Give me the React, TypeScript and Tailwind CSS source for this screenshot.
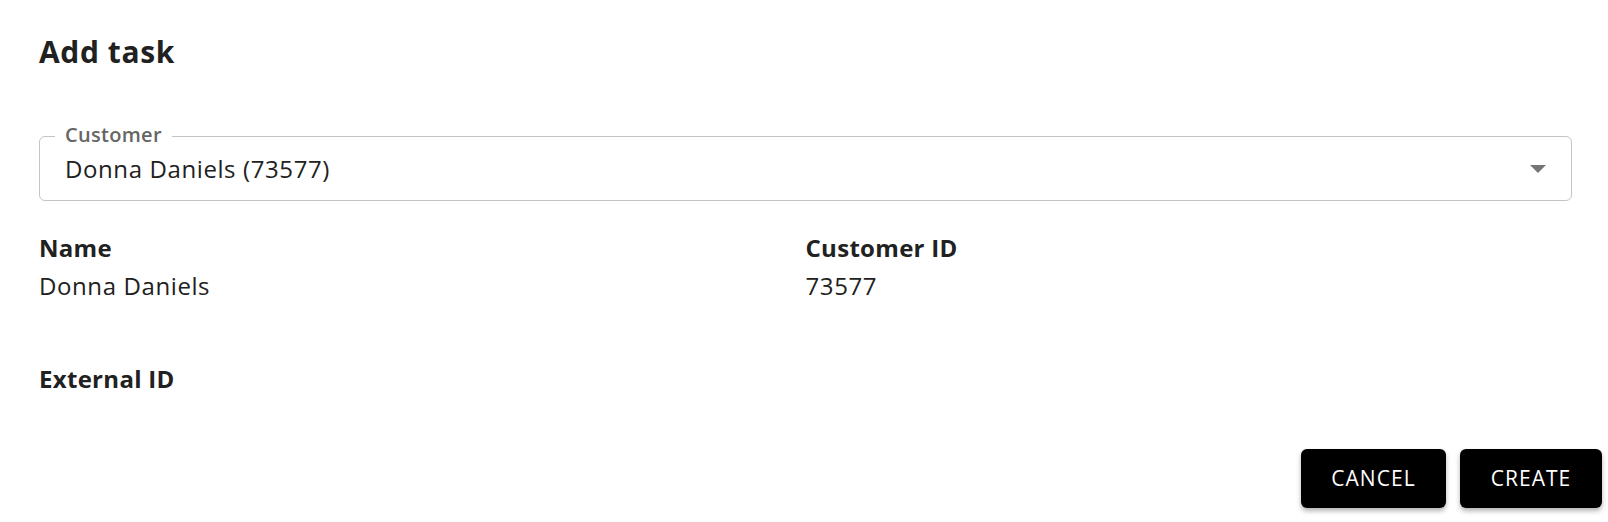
import React from 'react';

const font = { fontFamily: '"Open Sans", "Noto Sans", sans-serif' };

function Field({ label, value }: { label: string; value?: string }) {
  return (
    <div>
      <div className="text-[24px] font-bold leading-[38px] tracking-[0.3px] text-[#212121]">{label}</div>
      {value && <div className="text-[24px] leading-[38px] tracking-[0.6px] text-[#212121]">{value}</div>}
    </div>
  );
}

export default function App() {
  return (
    <div className="w-[1608px] h-[522px] bg-white" style={font}>
      <div className="pl-[39px] pr-[36px]">
        <h1 className="pt-[34px] text-[30px] font-bold leading-[36px] tracking-[0.6px] text-[#212121]">Add task</h1>

        {/* customer select */}
        <div className="relative mt-[66px] flex h-[65px] items-center justify-between rounded-[6px] border border-[#c4c4c4] pl-[25px] pr-[25px]">
          <span className="absolute -top-[12px] left-[15px] bg-white px-[10px] text-[20px] font-semibold leading-[20px] tracking-[0.3px] text-[#666666]">
            Customer
          </span>
          <span className="text-[24px] leading-[32px] tracking-[0.6px] text-[#212121]">Donna Daniels (73577)</span>
          <svg width="16" height="8" viewBox="0 0 16 8" className="mt-[1px]">
            <path d="M0 0h16L8 8z" fill="#757575" />
          </svg>
        </div>

        <div className="mt-[28px] grid grid-cols-2 gap-y-[55px]">
          <Field label="Name" value="Donna Daniels" />
          <Field label="Customer ID" value="73577" />
          <Field label="External ID" />
        </div>
      </div>

      <div className="mt-[51px] flex justify-end gap-[14px] pr-[6px]">
        <button className="h-[59px] w-[145px] rounded-[6px] bg-black text-[21px] font-medium tracking-[0.05em] text-white shadow-[0_3px_5px_rgba(0,0,0,0.3)]">
          CANCEL
        </button>
        <button className="h-[59px] w-[142px] rounded-[6px] bg-black text-[21px] font-medium tracking-[0.05em] text-white shadow-[0_3px_5px_rgba(0,0,0,0.3)]">
          CREATE
        </button>
      </div>
    </div>
  );
}
